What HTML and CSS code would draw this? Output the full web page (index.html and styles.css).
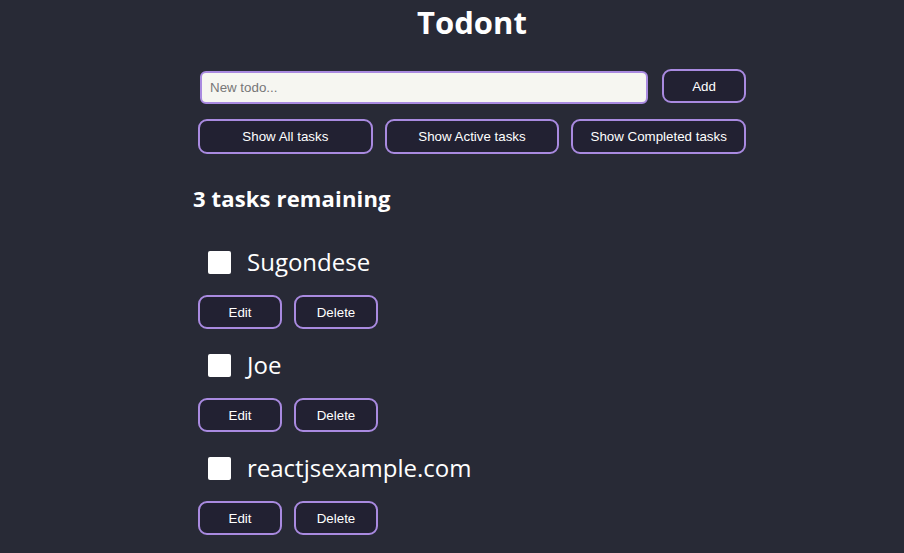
FILE: index.html
```html
<!DOCTYPE html>
<html>
<head>
<meta charset="utf-8">
<link rel="stylesheet" href="styles.css">
</head>
<body>
<div class="app">
  <h1 class="title">Todont</h1>
  <form class="new-form">
    <input class="new-input" type="text" placeholder="New todo...">
    <button type="button" class="btn btn-add">Add</button>
  </form>
  <div class="filters">
    <button type="button" class="btn">Show All tasks</button>
    <button type="button" class="btn">Show Active tasks</button>
    <button type="button" class="btn">Show Completed tasks</button>
  </div>
  <h2 class="remaining">3 tasks remaining</h2>
  <ul class="todos">
    <li class="todo">
      <label class="todo-check"><span class="box"></span><span class="todo-name">Sugondese</span></label>
      <div class="todo-actions"><button type="button" class="btn btn-small">Edit</button><button type="button" class="btn btn-small">Delete</button></div>
    </li>
    <li class="todo">
      <label class="todo-check"><span class="box"></span><span class="todo-name">Joe</span></label>
      <div class="todo-actions"><button type="button" class="btn btn-small">Edit</button><button type="button" class="btn btn-small">Delete</button></div>
    </li>
    <li class="todo">
      <label class="todo-check"><span class="box"></span><span class="todo-name">reactjsexample.com</span></label>
      <div class="todo-actions"><button type="button" class="btn btn-small">Edit</button><button type="button" class="btn btn-small">Delete</button></div>
    </li>
  </ul>
</div>
</body>
</html>
```
FILE: styles.css
```css
html, body {
  margin: 0;
  padding: 0;
  background: #282a36;
  height: 100%;
  overflow: hidden;
}
body {
  font-family: "Open Sans", "Noto Sans", sans-serif;
  color: #f8f8f2;
}
.app {
  margin-left: 192px;
  width: 554px;
  padding-top: 0;
}
.title {
  margin: 0;
  padding-left: 6px;
  text-align: center;
  font-size: 31px;
  font-weight: 700;
  line-height: 44px;
  color: #ffffff;
  height: 44px;
}
.new-form {
  margin: 25px 0 0 6px;
  display: flex;
  align-items: flex-start;
}
.new-input {
  box-sizing: border-box;
  margin: 2px 0 0 2px;
  width: 448px;
  height: 33px;
  border: 2px solid #a98ae0;
  border-radius: 6px;
  background: #f6f6f1;
  padding: 0 8px;
  font-family: "Liberation Sans", Arial, sans-serif;
  font-size: 13.33px;
  color: #333;
  outline: none;
}
.new-input::placeholder {
  color: #777;
}
.btn {
  box-sizing: border-box;
  height: 35px;
  border: 2px solid #a98ae0;
  border-radius: 9px;
  background: #222132;
  color: #ffffff;
  font-family: "Liberation Sans", Arial, sans-serif;
  font-size: 13.33px;
  padding: 0;
  cursor: pointer;
}
.btn-add {
  margin-left: 14px;
  width: 84px;
  height: 34px;
}
.filters {
  margin: 15px 0 0 6px;
  display: grid;
  grid-template-columns: repeat(3, 1fr);
  column-gap: 12px;
}
.remaining {
  margin: 29px 0 0 1px;
  font-size: 22px;
  font-weight: 700;
  line-height: 30px;
  color: #ffffff;
  letter-spacing: 0.15px;
}
.todos {
  list-style: none;
  margin: 29px 0 0 6px;
  padding: 0;
}
.todo {
  padding-bottom: 16px;
}
.todo-check {
  display: flex;
  align-items: center;
  height: 40px;
  padding-left: 10px;
  gap: 16px;
}
.box {
  width: 23px;
  height: 23px;
  background: #ffffff;
  border-radius: 2px;
}
.todo-name {
  font-size: 24px;
  color: #ffffff;
  line-height: 40px;
}
.todo-actions {
  margin-top: 13px;
  display: flex;
  gap: 12px;
}
.btn-small {
  width: 84px;
  height: 34px;
}
```
